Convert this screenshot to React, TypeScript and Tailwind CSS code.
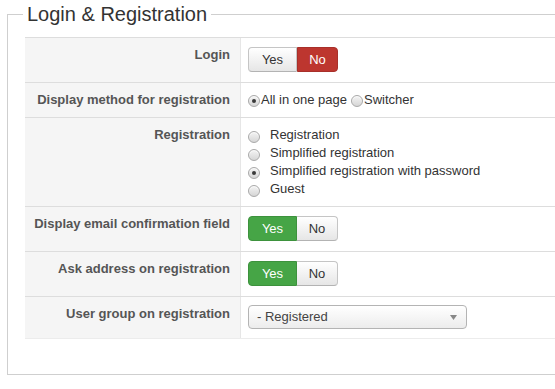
import React from "react";

type Row = {
  label: string;
  kind: "toggle" | "inline" | "stack" | "select";
  yes?: boolean;
  options?: string[];
  checked?: number;
};

const rows: Row[] = [
  { label: "Login", kind: "toggle", yes: false },
  {
    label: "Display method for registration",
    kind: "inline",
    options: ["All in one page", "Switcher"],
    checked: 0,
  },
  {
    label: "Registration",
    kind: "stack",
    options: [
      "Registration",
      "Simplified registration",
      "Simplified registration with password",
      "Guest",
    ],
    checked: 2,
  },
  { label: "Display email confirmation field", kind: "toggle", yes: true },
  { label: "Ask address on registration", kind: "toggle", yes: true },
  { label: "User group on registration", kind: "select" },
];

const Radio = ({ on, className = "" }: { on: boolean; className?: string }) => (
  <span
    className={`flex h-[12px] w-[12px] shrink-0 items-center justify-center rounded-full border border-[#a9a9a9] bg-gradient-to-b from-[#f4f4f4] to-[#d6d6d6] shadow-[inset_0_1px_1px_rgba(255,255,255,0.8)] ${className}`}
  >
    {on && <span className="h-[4px] w-[4px] rounded-full bg-[#3a3a3a]" />}
  </span>
);

const Toggle = ({ yes }: { yes: boolean }) => {
  const off =
    "bg-gradient-to-b from-white to-[#e6e6e6] text-[#333] border border-[#c5c5c5] border-b-[#b3b3b3]";
  return (
    <div className="flex h-[25px] text-[13px] leading-none">
      <span
        className={`flex w-[49px] items-center justify-center rounded-l-[4px] ${
          yes ? "border border-[#3d923d] bg-[#46a546] text-white" : off
        }`}
      >
        Yes
      </span>
      <span
        className={`flex w-[41px] items-center justify-center rounded-r-[4px] ${
          yes ? off + " border-l-0" : "border border-[#a8302a] bg-[#bd362f] text-white"
        }`}
      >
        No
      </span>
    </div>
  );
};

const Value = ({ row }: { row: Row }) => {
  if (row.kind === "toggle")
    return (
      <div className="pl-[7px] pt-[9px] pb-[10px]">
        <Toggle yes={!!row.yes} />
      </div>
    );
  if (row.kind === "inline")
    return (
      <div className="flex items-center py-2 pl-[7px] text-[13px] leading-[18px] text-[#333]">
        {row.options!.map((o, i) => (
          <label key={o} className={`flex items-center ${i > 0 ? "ml-[4px]" : ""}`}>
            <Radio on={i === row.checked} className="translate-y-[1px]" />
            <span className="ml-[1px]">{o}</span>
          </label>
        ))}
      </div>
    );
  if (row.kind === "stack")
    return (
      <div className="flex flex-col py-2 pl-[7px] text-[13px] leading-[18px] text-[#333]">
        {row.options!.map((o, i) => (
          <label key={o} className="flex h-[18px] items-center">
            <Radio on={i === row.checked} className="translate-y-[2px]" />
            <span className="ml-[10px]">{o}</span>
          </label>
        ))}
      </div>
    );
  return (
    <div className="pl-[7px] pt-2 pb-[9px]">
      <div className="flex h-[24px] w-[219px] items-center justify-between rounded-[4px] border border-[#b4b4b4] bg-gradient-to-b from-white via-[#f6f6f6] to-[#ececec] pl-[8px] pr-[9px] text-[13px] text-[#444]">
        <span>- Registered</span>
        <svg width="7" height="5" viewBox="0 0 7 5">
          <path d="M0 0h7L3.5 5z" fill="#888" />
        </svg>
      </div>
    </div>
  );
};

export default function App() {
  return (
    <div className="h-[389px] w-[555px] overflow-hidden bg-white font-['Liberation_Sans',Arial,sans-serif]">
      <fieldset className="ml-[7px] w-[620px] border border-[#cfcfcf] pl-[17px] pb-[35px]">
        <legend className="-ml-[2px] px-1 text-[20px] leading-[28px] text-[#333]">
          Login &amp; Registration
        </legend>
        <div className="mt-[9px] border-b border-[#ececec]">
          {rows.map((row) => (
            <div key={row.label} className="flex border-t border-[#ddd]">
              <div className="w-[216px] shrink-0 border-r border-[#e6e6e6] bg-[#f5f5f5] pt-2 pr-[10px] text-right text-[13px] font-bold leading-[18px] text-[#555]">
                {row.label}
              </div>
              <div className="flex-1">
                <Value row={row} />
              </div>
            </div>
          ))}
        </div>
      </fieldset>
    </div>
  );
}
